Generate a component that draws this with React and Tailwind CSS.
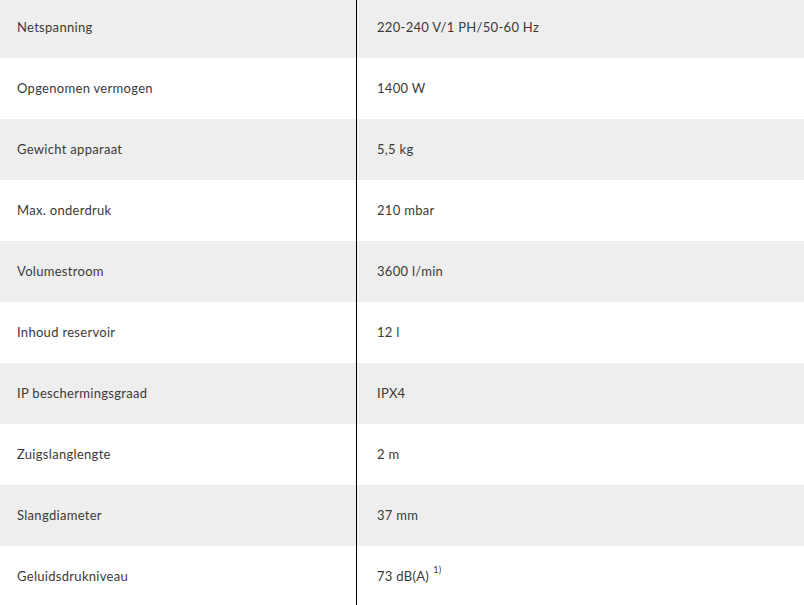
const specs = [
  ['Netspanning', '220-240 V/1 PH/50-60 Hz'],
  ['Opgenomen vermogen', '1400 W'],
  ['Gewicht apparaat', '5,5 kg'],
  ['Max. onderdruk', '210 mbar'],
  ['Volumestroom', '3600 l/min'],
  ['Inhoud reservoir', '12 l'],
  ['IP beschermingsgraad', 'IPX4'],
  ['Zuigslanglengte', '2 m'],
  ['Slangdiameter', '37 mm'],
  ['Geluidsdrukniveau', '73 dB(A)', '1)'],
];

export default function App() {
  return (
    <div className="w-[804px] h-[605px] overflow-hidden bg-white text-[#3a3a3a] text-[13px] tracking-[0.3px] font-['Lato',sans-serif]">
      <div className="-mt-[3px]">
        {specs.map(([label, value, note], i) => (
          <div
            key={label}
            className={`flex h-[61px] items-center ${i % 2 === 0 ? 'bg-[#eeeeee]' : 'bg-white'}`}
          >
            <div className="w-[357px] shrink-0 pl-[17px] border-r border-black h-full flex items-center">
              {label}
            </div>
            <div className="pl-[20px] flex items-center h-full">
              {value}
              {note && <sup className="ml-1 text-[9px] -top-[7px]">{note}</sup>}
            </div>
          </div>
        ))}
      </div>
    </div>
  );
}
